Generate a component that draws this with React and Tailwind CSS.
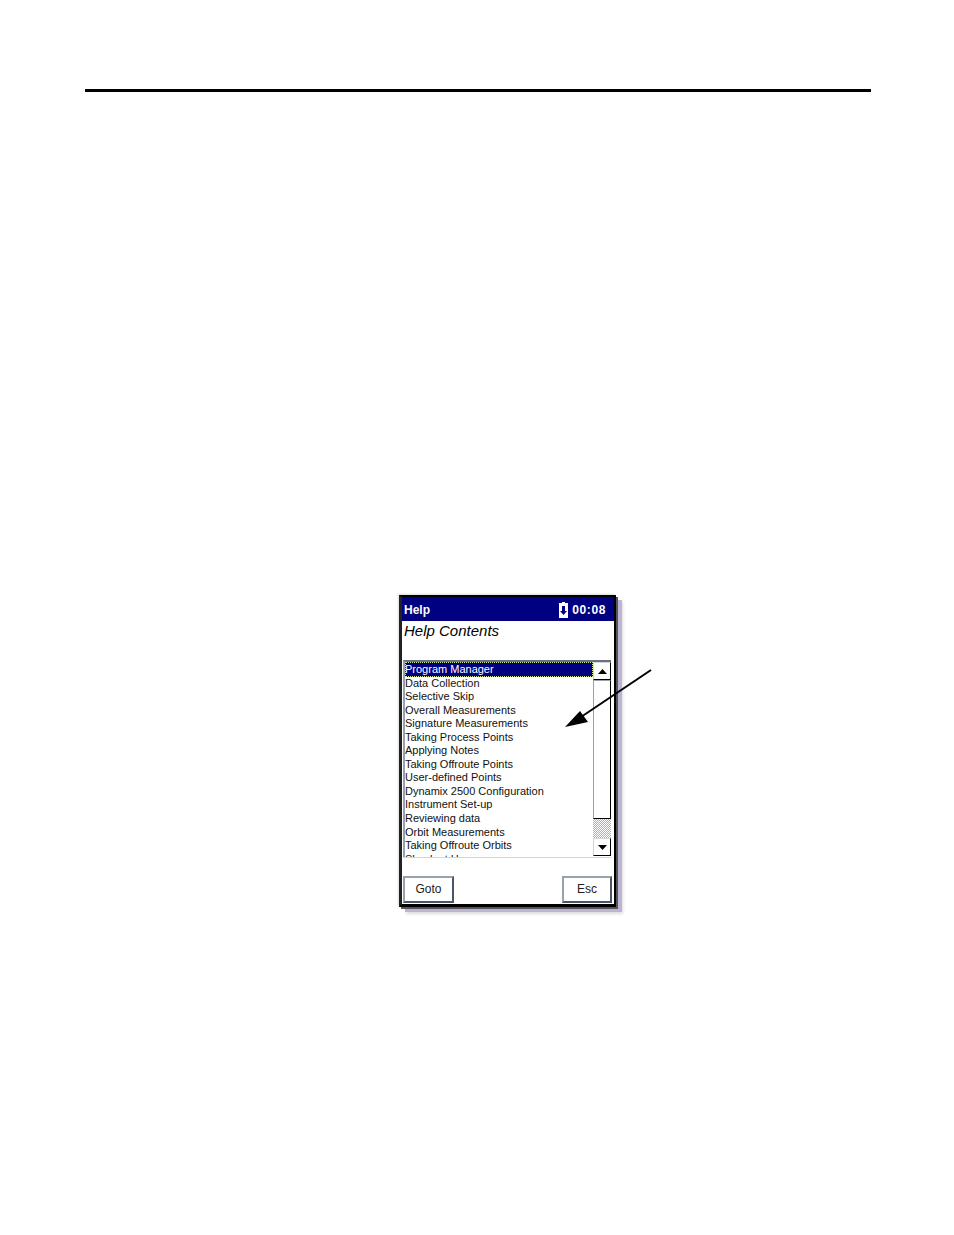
import React from "react";

const items = [
  "Program Manager",
  "Data Collection",
  "Selective Skip",
  "Overall Measurements",
  "Signature Measurements",
  "Taking Process Points",
  "Applying Notes",
  "Taking Offroute Points",
  "User-defined Points",
  "Dynamix 2500 Configuration",
  "Instrument Set-up",
  "Reviewing data",
  "Orbit Measurements",
  "Taking Offroute Orbits",
  "Shock at Home",
];

// --- Scroll button ---
const ScrollButton = ({ up }) => (
  <div className="h-[18px] flex items-center justify-center bg-white border border-black border-t-gray-300 border-l-gray-300 box-border">
    <svg width="9" height="5" viewBox="0 0 9 5">
      <path d={up ? "M4.5 0 L9 5 L0 5 Z" : "M4.5 5 L9 0 L0 0 Z"} fill="#000" />
    </svg>
  </div>
);

const DialogButton = ({ label, width }) => (
  <div className={`${width} h-[27px] pb-px flex items-center justify-center bg-white border-2 border-t-gray-400 border-l-gray-400 border-r-gray-600 border-b-gray-600 text-[12px] text-[#222]`}>
    {label}
  </div>
);

export default function App() {
  return (
    <div className="relative w-[954px] h-[1235px] bg-white font-['Liberation_Sans',sans-serif] overflow-hidden">
      <div className="pt-[89px] px-[85px] w-[871px] box-content">
        <div className="h-[3px] w-[786px] bg-black" />
      </div>

      <div className="mt-[503px] ml-[399px] w-[217px] h-[312px] flex flex-col bg-white border-[3px] border-t-2 border-r-2 border-black border-l-[#222] shadow-[2px_2px_0_#555,6px_5px_0_#bdb3d2,7px_7px_3px_#ddd,-1px_-1px_2px_#ddd]">
        <div className="h-[24px] shrink-0 flex items-center justify-between pl-[2px] pr-[8px] pt-px bg-[#000080] text-white text-[12px] font-bold">
          <span>Help</span>
          <span className="flex items-center gap-[4px]">
            <svg width="9" height="16" viewBox="0 0 9 16">
              <path d="M3 0 H6 V1 H9 V16 H0 V1 H3 Z" fill="#fff" />
              <path d="M3 4 H6 V9 H8 L4.5 13 L1 9 H3 Z" fill="#000080" />
            </svg>
            <span className="tracking-[0.6px]">00:08</span>
          </span>
        </div>

        <div className="h-[39px] shrink-0 pl-[2px] text-[15px] leading-[20px] italic text-black">Help Contents</div>

        <div className="ml-px w-[208px] h-[197px] shrink-0 flex border-2 border-gray-500 border-r-0 border-b-0 border-l-gray-400">
          <div className="w-[188px] h-full overflow-hidden text-[11px] leading-[13.55px] text-[#111]">
            {items.map((item, i) => (
              <div
                key={item}
                className={i === 0 ? "pt-px -mb-px bg-[#000080] text-white outline-1 -outline-offset-1 outline-dotted outline-[#cfe89a]" : "translate-y-px"}
              >
                {item}
              </div>
            ))}
          </div>
          <div className="w-[18px] flex flex-col">
            <ScrollButton up />
            <div className="h-[139px] bg-white border border-gray-400 border-r-black border-b-black" />
            <div className="h-[19px] bg-[repeating-conic-gradient(#b0b0b0_0_25%,#ffffff_0_50%)] bg-[length:2px_2px]" />
            <ScrollButton />
          </div>
        </div>
        <div className="ml-px w-[208px] h-px bg-gray-300" />

        <div className="flex justify-between pl-px pr-[2px] mt-[18px]">
          <DialogButton label="Goto" width="w-[51px]" />
          <DialogButton label="Esc" width="w-[50px]" />
        </div>
      </div>

      {/* callout arrow over the list */}
      <svg className="absolute left-[555px] top-[660px]" width="105" height="75" viewBox="0 0 105 75">
        <path d="M96 10 L26 57" stroke="#000" strokeWidth="2" fill="none" />
        <path d="M10 67 L25 51 L33 62 Z" fill="#000" />
      </svg>
    </div>
  );
}
